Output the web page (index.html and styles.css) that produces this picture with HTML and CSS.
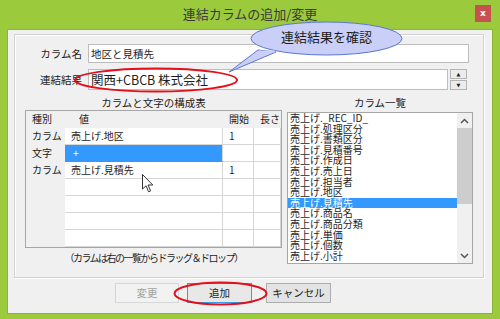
FILE: index.html
```html
<!DOCTYPE html>
<html lang="ja">
<head>
    <meta charset="UTF-8">
    <title>連結カラムの追加/変更</title>
    <link rel="stylesheet" href="styles.css">
</head>
<body>
    <div class="window">
        <div class="titlebar">
            <span></span>
            <span class="title">連結カラムの追加/変更</span>
            <span class="close">x</span>
        </div>
        <div class="client">
            <div class="group">
                <div class="field">
                    <span class="label">カラム名</span>
                    <div class="input name">地区と見積先</div>
                </div>
                <div class="field">
                    <span class="label">連結結果</span>
                    <div class="input result">関西+CBCB 株式会社</div>
                    <div class="spin">
                        <span class="spin-btn">&#9650;</span>
                        <span class="spin-btn">&#9660;</span>
                    </div>
                </div>
                <div class="panes">
                    <div class="pane-left">
                        <div class="caption">カラムと文字の構成表</div>
                        <div class="grid">
                            <div class="head">種別</div>
                            <div class="head head-val">値</div>
                            <div class="head">開始</div>
                            <div class="head">長さ</div>

                            <div class="kind">カラム</div>
                            <div class="cell">売上げ.地区</div>
                            <div class="cell">1</div>
                            <div class="cell"></div>

                            <div class="kind">文字</div>
                            <div class="cell selected">+</div>
                            <div class="cell"></div>
                            <div class="cell"></div>

                            <div class="kind">カラム</div>
                            <div class="cell">売上げ.見積先</div>
                            <div class="cell">1</div>
                            <div class="cell"></div>

                            <div class="kind"></div><div class="cell"></div><div class="cell"></div><div class="cell"></div>
                            <div class="kind"></div><div class="cell"></div><div class="cell"></div><div class="cell"></div>
                            <div class="kind"></div><div class="cell"></div><div class="cell"></div><div class="cell"></div>
                            <div class="kind"></div><div class="cell"></div><div class="cell"></div><div class="cell"></div>
                        </div>
                        <div class="hint">（カラムは右の一覧からドラッグ＆ドロップ）</div>
                    </div>
                    <div class="pane-right">
                        <div class="caption">カラム一覧</div>
                        <div class="listbox">
                            <ul class="items">
                                <li>売上げ._REC_ID_</li>
                                <li>売上げ.処理区分</li>
                                <li>売上げ.書類区分</li>
                                <li>売上げ.見積番号</li>
                                <li>売上げ.作成日</li>
                                <li>売上げ.売上日</li>
                                <li>売上げ.担当者</li>
                                <li>売上げ.地区</li>
                                <li class="active">売上げ.見積先</li>
                                <li>売上げ.商品名</li>
                                <li>売上げ.商品分類</li>
                                <li>売上げ.単価</li>
                                <li>売上げ.個数</li>
                                <li>売上げ.小計</li>
                            </ul>
                            <div class="scrollbar">
                                <div class="arrow">
                                    <svg width="9" height="6" viewBox="0 0 9 6"><path d="M1 5 L4.5 1.5 L8 5" fill="none" stroke="#555" stroke-width="1.5"/></svg>
                                </div>
                                <div class="thumb"></div>
                                <div class="track"></div>
                                <div class="arrow">
                                    <svg width="9" height="6" viewBox="0 0 9 6"><path d="M1 1 L4.5 4.5 L8 1" fill="none" stroke="#555" stroke-width="1.5"/></svg>
                                </div>
                            </div>
                        </div>
                    </div>
                </div>
            </div>
            <div class="buttons">
                <div class="btn disabled">変更</div>
                <div class="btn default">追加</div>
                <div class="btn">キャンセル</div>
            </div>
        </div>

        <!-- annotations drawn over the dialog -->
        <svg class="marks" width="500" height="319" viewBox="0 0 500 319">
            <path d="M258 50 L229 72 L276 52 Z" fill="#c9cff6" stroke="#5a78d0" stroke-width="1"/>
            <ellipse cx="326.5" cy="38.5" rx="75.5" ry="16.5" fill="#c9cff6" stroke="#5a78d0" stroke-width="1"/>
            <path d="M259 51.5 L275 51.5" stroke="#c9cff6" stroke-width="2"/>
            <ellipse cx="156" cy="80" rx="81" ry="11.5" fill="none" stroke="#e3101b" stroke-width="2"/>
            <ellipse cx="220.5" cy="293.5" rx="46" ry="11" fill="none" stroke="#e3101b" stroke-width="2"/>
        </svg>
        <div class="callout-text">連結結果を確認</div>
        <svg class="cursor" width="12" height="19" viewBox="0 0 12 19">
            <path d="M0.5 0.5 L0.5 15 L4 11.8 L6.6 17.8 L8.6 16.9 L6.1 11 L10.8 11 Z" fill="#fff" stroke="#333" stroke-width="1"/>
        </svg>
    </div>
</body>
</html>
```

FILE: styles.css
```css
* {
    box-sizing: border-box;
}
body {
    margin: 0;
    font-family: "Noto Sans CJK JP", "Noto Sans", sans-serif;
    color: #1e1e1e;
}
.window {
    position: relative;
    width: 500px;
    height: 319px;
    background: #9bcb3c;
    overflow: hidden;
}
.titlebar {
    display: grid;
    grid-template-columns: 1fr auto 1fr;
    height: 29px;
}
.title {
    font-size: 13px;
    line-height: 28px;
    color: #3a3a3a;
}
.close {
    justify-self: end;
    width: 16px;
    height: 17px;
    margin: 5px 9px 0 0;
    background: #c75050;
    color: #fff;
    font-family: "DejaVu Sans", sans-serif;
    font-size: 9px;
    font-weight: bold;
    line-height: 16px;
    text-align: center;
}
.client {
    height: 285px;
    margin: 0 7px;
    padding: 4px 0 0 6px;
    background: #f0f0f0;
    border: 1px solid #8bb536;
}
.group {
    width: 470px;
    height: 244px;
    padding-top: 9px;
    border: 1px solid #d2d2d2;
    box-shadow: inset 1px 1px 0 #fff, 1px 1px 0 #fff;
}
.field {
    display: flex;
    align-items: center;
    margin-bottom: 6px;
}
.label {
    width: 67px;
    margin-right: 6px;
    text-align: right;
    font-size: 10.5px;
    line-height: 14px;
}
.input {
    background: #fff;
    border: 1px solid #bdbdbd;
    padding-left: 2px;
}
.name {
    width: 381px;
    height: 19px;
    font-size: 10.5px;
    line-height: 17px;
}
.result {
    width: 360px;
    height: 21px;
    font-size: 12.5px;
    line-height: 19px;
}
.spin {
    display: flex;
    flex-direction: column;
    gap: 1px;
    margin-left: 2px;
}
.spin-btn {
    width: 17px;
    height: 10px;
    background: #ececec;
    border: 1px solid #b4b4b4;
    font-family: "DejaVu Sans", sans-serif;
    font-size: 5px;
    line-height: 8px;
    text-align: center;
    color: #222;
}
.panes {
    display: flex;
    gap: 5px;
    margin-top: 4px;
    padding-left: 10px;
}
.pane-left {
    width: 257px;
}
.pane-right {
    width: 186px;
}
.caption {
    height: 14px;
    font-size: 10.5px;
    line-height: 14px;
    text-align: center;
}
.grid {
    display: grid;
    grid-template-columns: 39px 158px 31px 27px;
    grid-auto-rows: 17px;
    border: 1px solid #a6a6a6;
    background: #f0f0f0;
    font-size: 10px;
    line-height: 16px;
}
.head {
    padding-left: 6px;
    white-space: nowrap;
    overflow: hidden;
}
.head-val {
    padding-left: 14px;
}
.kind {
    padding-left: 6px;
}
.cell {
    background: #fff;
    border-right: 1px solid #d6d6d6;
    border-bottom: 1px solid #d6d6d6;
    padding-left: 6px;
}
.cell.selected {
    background: #3399ff;
    border-bottom-color: #3399ff;
    color: #fff;
    padding-left: 8px;
}
.hint {
    margin-top: 3px;
    font-size: 10px;
    line-height: 14px;
    letter-spacing: -1.5px;
    text-align: center;
}
.listbox {
    display: flex;
    height: 152px;
    margin-top: 2px;
    background: #fff;
    border: 1px solid #a6a6a6;
}
.items {
    flex: 1;
    margin: 0;
    padding: 0;
    list-style: none;
    overflow: hidden;
    font-size: 10px;
    line-height: 10.6px;
}
.items li {
    height: 10.6px;
    padding-left: 2px;
    white-space: nowrap;
}
.items li.active {
    background: #3399ff;
    color: #fff;
}
.scrollbar {
    display: flex;
    flex-direction: column;
    width: 15px;
    background: #f0f0f0;
}
.arrow {
    display: flex;
    align-items: center;
    justify-content: center;
    height: 15px;
}
.thumb {
    height: 76px;
    background: #cdcdcd;
}
.track {
    flex: 1;
}
.buttons {
    display: flex;
    gap: 8px;
    margin-top: 5px;
    padding-left: 101px;
}
.btn {
    width: 65px;
    height: 20px;
    background: #e3e3e3;
    border: 1px solid #adadad;
    font-size: 10.5px;
    line-height: 18px;
    text-align: center;
}
.btn.disabled {
    width: 64px;
    background: #f2f2f2;
    border-color: #d6d6d6;
    color: #a3a3a3;
}
.btn.default {
    margin-right: 6px;
    background: #e8e8e8;
    border-color: #3c9be8;
}
.marks {
    position: absolute;
    top: 0;
    left: 0;
    pointer-events: none;
}
.callout-text {
    position: absolute;
    top: 28px;
    left: 251px;
    width: 151px;
    font-size: 13px;
    line-height: 18px;
    text-align: center;
    color: #1c1c1c;
}
.cursor {
    position: absolute;
    top: 174px;
    left: 142px;
}
```
